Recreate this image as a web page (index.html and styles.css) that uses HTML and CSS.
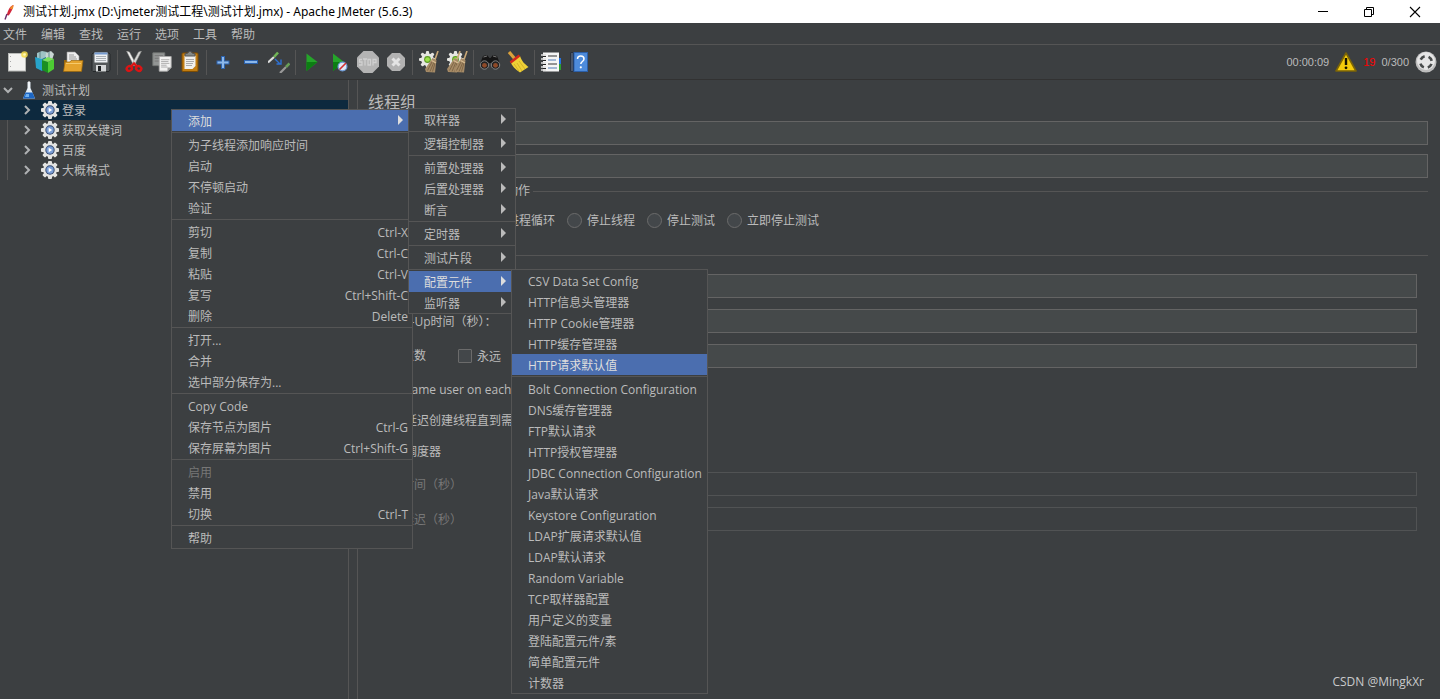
FILE: index.html
```html
<!DOCTYPE html>
<html lang="zh-CN">
<head>
<meta charset="utf-8">
<title>测试计划.jmx - Apache JMeter (5.6.3)</title>
<link rel="stylesheet" href="styles.css">
</head>
<body>
<svg class="defs" aria-hidden="true">
  <symbol id="cog" viewBox="0 0 20 20">
    <g fill="#e4e4e2"><rect x="8" y="1" width="4" height="18" rx="1"/><rect x="8" y="1" width="4" height="18" rx="1" transform="rotate(45 10 10)"/><rect x="8" y="1" width="4" height="18" rx="1" transform="rotate(90 10 10)"/><rect x="8" y="1" width="4" height="18" rx="1" transform="rotate(135 10 10)"/><circle cx="10" cy="10" r="6.900"/></g>
    <circle cx="10" cy="10" r="4.700" fill="#34486f"/><circle cx="10" cy="10" r="3.700" fill="#7c9fd6"/><path d="M8.700 7.800 12.200 10 8.700 12.200z" fill="#fff"/>
  </symbol>
  <symbol id="gear-small" viewBox="0 0 16 16">
    <g fill="#e6e6e2"><rect x="6.500" width="3" height="16" rx="1"/><rect x="6.500" width="3" height="16" rx="1" transform="rotate(45 8 8)"/><rect x="6.500" width="3" height="16" rx="1" transform="rotate(90 8 8)"/><rect x="6.500" width="3" height="16" rx="1" transform="rotate(135 8 8)"/><circle cx="8" cy="8" r="6"/></g>
    <circle cx="8" cy="8" r="3.200" fill="#5c9a22"/><circle cx="8" cy="8" r="2.200" fill="#9be04a"/>
  </symbol>
  <symbol id="broom" viewBox="0 0 14 22">
    <path d="M13 0 9.500 10" stroke="#c9a877" stroke-width="1.600"/><path d="M7.500 7 11.500 9 10 21.500 1 21 0 18z" fill="#a58a66"/><path d="M7.500 10 2.500 19.500M9 11 5 20.500M10.200 11.500 7.500 20.500" stroke="#6f573a" stroke-width=".7"/><path d="M6.500 9.500 11 12" stroke="#d9bd92" stroke-width="1.400"/>
  </symbol>
</svg>

<header class="titlebar">
  <svg class="feather" viewBox="0 0 12 16"><path d="M10.500 1C7 2 5 6 3.800 11L5.800 11.500C8 8 10 5 10.500 1z" fill="#d2283c"/><path d="M10.500 1C9 1.500 7.700 2.800 6.700 4.500L9.400 5.500C10.200 4 10.600 2.500 10.500 1z" fill="#ef8a2a"/><path d="M4 10 2 15.500" stroke="#6a2a68" stroke-width="1.400"/></svg>
  <span class="window-title">测试计划.jmx (D:\jmeter测试工程\测试计划.jmx) - Apache JMeter (5.6.3)</span>
  <div class="window-buttons">
    <button type="button" aria-label="最小化"><svg viewBox="0 0 12 12"><path d="M1 5.500H11" stroke="#000"/></svg></button>
    <button type="button" aria-label="还原"><svg viewBox="0 0 12 12" fill="none" stroke="#000"><path d="M1.500 3.500h7v7h-7zM3.500 3.500v-2h7v7h-2"/></svg></button>
    <button type="button" aria-label="关闭"><svg viewBox="0 0 12 12"><path d="M1 1 11 11M11 1 1 11" stroke="#000" stroke-width="1.100"/></svg></button>
  </div>
</header>

<nav class="menubar">
  <button type="button">文件</button><button type="button">编辑</button><button type="button">查找</button><button type="button">运行</button><button type="button">选项</button><button type="button">工具</button><button type="button">帮助</button>
</nav>

<div class="toolbar">
  <button type="button" class="tool" aria-label="新建"><svg viewBox="0 0 22 22"><rect x="2.500" y="2.500" width="17" height="17.500" fill="#f3f3f1" stroke="#b9bbb8"/><path d="M4.500 5v13" stroke="#aaa" stroke-dasharray="1 4"/><circle cx="18.500" cy="3.500" r="3.300" fill="#f4dc4a" opacity=".85"/><circle cx="18.500" cy="3.500" r="1.300" fill="#fff8b8"/></svg></button>
  <button type="button" class="tool" aria-label="模板"><svg viewBox="0 0 22 22"><path d="M3 2 8 0 13 1 12 8H3z" fill="#9fc3c5"/><path d="M12 2 17 0 20 3 18 9H11z" fill="#c9d6d4"/><path d="M6 1v6M15 1v6" stroke="#5f8588"/><path d="M1 6 8 8V20L2 17z" fill="#27a3c9"/><path d="M8 8 12 6V18L8 20z" fill="#1b6f96"/><path d="M8 9 14 11V22L8 19z" fill="#1a8f22"/><path d="M14 11 20 8V18L14 22z" fill="#4dcb33"/><path d="M8 9 14 6 20 8 14 11z" fill="#7be05d"/></svg></button>
  <button type="button" class="tool" aria-label="打开"><svg viewBox="0 0 22 22"><path d="M2 9h5l1 2h12v9H2z" fill="#9a660b"/><path d="M5 1h8l4 4v8H5z" fill="#eee" stroke="#999" stroke-width=".6"/><path d="M7 4h5M7 6h7M7 8h8" stroke="#999"/><path d="M3 11h5l1-1.500h12L19.500 20.500H1.500z" fill="#e4a32d" stroke="#9a660b" stroke-width=".7"/><path d="M4 12.500h15" stroke="#f6ca6b"/></svg></button>
  <button type="button" class="tool" aria-label="保存"><svg viewBox="0 0 22 22"><path d="M3 2h16l1 1v16l-1 1.500H3l-1-1V3z" fill="#54585a" stroke="#25282a"/><rect x="4.500" y="1.500" width="13" height="10" fill="#eef1f4"/><rect x="4.500" y="1.500" width="13" height="2" fill="#759bd0"/><path d="M6 5.500h10M6 7.500h10M6 9.500h10" stroke="#a9afb4"/><rect x="6" y="14" width="10" height="6.500" fill="#d5d7d8"/><rect x="8" y="15" width="3" height="5" fill="#1d2022"/></svg></button>
  <span class="tool-sep"></span>
  <button type="button" class="tool" aria-label="剪切"><svg viewBox="0 0 22 22"><path d="M3.500 0 6.500 1 13.500 14 11 15z" fill="#f0f0ee" stroke="#8b8b89" stroke-width=".5"/><path d="M18.500 0 15.500 1 8.500 14 11 15z" fill="#d6d7d5" stroke="#8b8b89" stroke-width=".5"/><g fill="none" stroke="#dc1414" stroke-width="2.400"><ellipse cx="6.300" cy="17.500" rx="2.700" ry="2.300" transform="rotate(-35 6.300 17.500)"/><ellipse cx="15.700" cy="17.500" rx="2.700" ry="2.300" transform="rotate(35 15.700 17.500)"/><path d="M8 15.500 11 12.500 14 15.500"/></g></svg></button>
  <button type="button" class="tool" aria-label="复制"><svg viewBox="0 0 24 22"><path d="M2 1h13v14H2z" fill="#929594" stroke="#747776"/><path d="M4 4h9M4 7h9M4 10h9" stroke="#777"/><path d="M9 5h13v12l-4 4H9z" fill="#f2f2f1" stroke="#aaa"/><path d="M11 8.500h9M11 10.500h8M11 12.500h9M11 14.500h6M11 16.500h7" stroke="#aaa"/><path d="M22 17h-4v4z" fill="#999"/></svg></button>
  <button type="button" class="tool" aria-label="粘贴"><svg viewBox="0 0 22 22"><rect x="3" y="2" width="16" height="18.500" rx="1" fill="#c17d12" stroke="#7d4d04"/><path d="M5.500 4.500h11V15l-3 3h-8z" fill="#f0f0ed"/><path d="M7 8.500h8M7 10.500h8M7 12.500h7M7 14.500h6" stroke="#aaa"/><path d="M6 5V3l3-1 1-1.500h2L13 2l3 1v2z" fill="#858985" stroke="#555"/></svg></button>
  <span class="tool-sep"></span>
  <button type="button" class="tool" aria-label="展开"><svg viewBox="0 0 22 22"><path d="M11 5v13M4.500 11.500h13" stroke="#2c62ad" stroke-width="4"/><path d="M11 6v11M5.500 11.500h11" stroke="#8cb8ea" stroke-width="2"/></svg></button>
  <button type="button" class="tool" aria-label="折叠"><svg viewBox="0 0 22 22"><path d="M4 11h14" stroke="#2c62ad" stroke-width="4"/><path d="M5 11h12" stroke="#8cb8ea" stroke-width="2"/></svg></button>
  <button type="button" class="tool" aria-label="切换"><svg viewBox="0 0 22 22"><path d="M0 11.500 6 6" stroke="#ddd" stroke-width="2.200"/><path d="M6 6 10 1.500" stroke="#71b557" stroke-width="2.600"/><path d="M12 22 18 16" stroke="#999" stroke-width="2.200"/><path d="M18 16 21.500 12.500" stroke="#689e58" stroke-width="2.600"/><path d="M7 8 12 13M8.500 13h4.500V8.500" fill="none" stroke="#2d70d2" stroke-width="1.400"/></svg></button>
  <span class="tool-sep"></span>
  <button type="button" class="tool" aria-label="启动"><svg viewBox="0 0 22 22"><path d="M5.500 2.500 16.500 11 5.500 20z" fill="#25a52a"/><path d="M5.500 11H16.500L5.500 20z" fill="#0c7d13"/></svg></button>
  <button type="button" class="tool" aria-label="不停顿启动"><svg viewBox="0 0 22 22"><path d="M4 2.500 15 11 4 20z" fill="#25a52a"/><path d="M4 11H15L4 20z" fill="#0c7d13"/><circle cx="13.500" cy="15.500" r="4.400" fill="#dfe8f6" stroke="#6e9bd6" stroke-width="1.200"/><path d="M10.500 18.500 17 12" stroke="#d23030" stroke-width="1.600"/></svg></button>
  <button type="button" class="tool" aria-label="停止"><svg viewBox="0 0 22 22"><path d="M6.500 0h9L22 6.500v9L15.500 22h-9L0 15.500v-9z" fill="#b4b4b4"/><g fill="none" stroke="#d0d0d0" stroke-width="1.300"><path d="M5 8.500H2.500v2.500H5v3H2M6 8h4M8 8v6.500M11 8.500h2.500v5.500H11zM16 14.500v-6h3v3h-3"/></g></svg></button>
  <button type="button" class="tool" aria-label="关闭线程"><svg viewBox="0 0 22 22"><path d="M7 2h8l5 5v8l-5 5H7l-5-5V7z" fill="#b2b2b2"/><path d="M7.500 7.500 14.500 14.500M14.500 7.500 7.500 14.500" stroke="#e4e4e4" stroke-width="3"/></svg></button>
  <span class="tool-sep"></span>
  <button type="button" class="tool" aria-label="清除"><svg viewBox="0 0 22 22"><use href="#gear-small" x="1" y="0" width="17" height="17"/><use href="#broom" x="7" y="0" width="14" height="22"/></svg></button>
  <button type="button" class="tool" aria-label="清除全部"><svg viewBox="0 0 22 22"><use href="#gear-small" x="1" y="0" width="17" height="17"/><use href="#broom" x="1" y="0" width="14" height="22"/><use href="#broom" x="8" y="0" width="14" height="22"/></svg></button>
  <span class="tool-sep"></span>
  <button type="button" class="tool" aria-label="查找"><svg viewBox="0 0 22 22"><path d="M1 13 4 5 8 4 10.500 7h1L14 4l4 1 3 8-4 5h-3l-2-6h-2l-2 6H5z" fill="#151515"/><path d="M4.500 6 8 5M14 5l3.500 1" stroke="#777"/><circle cx="5.500" cy="14" r="4.200" fill="#222" stroke="#999" stroke-width=".8"/><circle cx="16.500" cy="14" r="4.200" fill="#222" stroke="#999" stroke-width=".8"/><circle cx="5.500" cy="14.300" r="2.400" fill="#8f4a28"/><circle cx="16.500" cy="14.300" r="2.400" fill="#8f4a28"/></svg></button>
  <button type="button" class="tool" aria-label="重置查找"><svg viewBox="0 0 22 22"><path d="M2 1 8 8" stroke="#dba13b" stroke-width="3.200"/><path d="M8 7 13 5C15 11 18 13 21.500 16L13 21.500C8 18 5 15 3.500 11z" fill="#eed036"/><path d="M10 12 15 20M12 10 18 18M7 13 12 20" stroke="#c9a424" stroke-width=".7"/><path d="M3.500 11.500 12.500 4.500" stroke="#d3271c" stroke-width="2.600"/></svg></button>
  <span class="tool-sep"></span>
  <button type="button" class="tool" aria-label="函数助手"><svg viewBox="0 0 22 22"><path d="M19 7h2v6h-2z" fill="#2571dc"/><path d="M19 13h2v6h-2z" fill="#2b9d32"/><rect x="3" y="1.500" width="16" height="19" fill="#f5f5f5"/><path d="M1 4h5M1 8h5M1 12h5M1 16h5M1 19h5" stroke="#ddd" stroke-width="1.600"/><path d="M3 5.500h3M3 9.500h3M3 13.500h3M3 17.500h3" stroke="#222"/><path d="M8 5h9M8 13h9" stroke="#333" stroke-width="1.200"/><path d="M8 9h8M8 17h9" stroke="#527cb5" stroke-width="1.200"/></svg></button>
  <button type="button" class="tool" aria-label="帮助"><svg viewBox="0 0 22 22"><path d="M2.500 1.500h5v19h-5z" fill="#17243b"/><rect x="6" y="1.500" width="13.500" height="19" fill="#4d8bdb" stroke="#2c5fa8"/><path d="M4 2v18" stroke="#9aa5b5" stroke-width=".8"/><path d="M9.500 8c0-4 6.500-4 6.500 0 0 2.500-3.200 2.500-3.200 5" fill="none" stroke="#fff" stroke-width="1.500"/><circle cx="12.800" cy="16.300" r="1.100" fill="#fff"/></svg></button>
  <div class="status">
    <span>00:00:09</span>
    <svg class="warn" viewBox="0 0 22 20"><path d="M11 1 21 19H1z" fill="#f5cb0b" stroke="#7b6407" stroke-width="1.600" stroke-linejoin="round"/><path d="M11 6v7" stroke="#171400" stroke-width="2.400"/><circle cx="11" cy="15.800" r="1.400" fill="#171400"/></svg>
    <span class="errors">19</span>
    <span>0/300</span>
    <svg class="remote" viewBox="0 0 22 22"><circle cx="11" cy="11" r="10.500" fill="#bdbdbd"/><circle cx="11" cy="10" r="9" fill="#e6e6e6"/><circle cx="11" cy="11" r="5.800" fill="none" stroke="#484b4b" stroke-width="2.600" stroke-dasharray="5 4.110" stroke-dashoffset="-2"/></svg>
  </div>
</div>

<main class="workspace">
  <aside class="tree">
    <div class="node root"><svg class="caret" viewBox="0 0 10 10"><path d="M1 3 5 7 9 3" /></svg><svg class="flask" viewBox="0 0 16 20"><path d="M6.500 2h3v6l4.500 10.500H2L6.500 8z" fill="#dfe9f2"/><path d="M4.500 12.500h7l2.500 6h-12z" fill="#1c66c4"/><path d="M5 14h3v3H4z" fill="#6fb0f0"/><path d="M8 1v9" stroke="#fff"/></svg><span>测试计划</span></div>
    <div class="children">
      <div class="node selected"><svg class="caret" viewBox="0 0 10 10"><path d="M3 1 7 5 3 9"/></svg><svg class="cog"><use href="#cog"/></svg><span>登录</span></div>
      <div class="node"><svg class="caret" viewBox="0 0 10 10"><path d="M3 1 7 5 3 9"/></svg><svg class="cog"><use href="#cog"/></svg><span>获取关键词</span></div>
      <div class="node"><svg class="caret" viewBox="0 0 10 10"><path d="M3 1 7 5 3 9"/></svg><svg class="cog"><use href="#cog"/></svg><span>百度</span></div>
      <div class="node"><svg class="caret" viewBox="0 0 10 10"><path d="M3 1 7 5 3 9"/></svg><svg class="cog"><use href="#cog"/></svg><span>大概格式</span></div>
    </div>
  </aside>
  <form class="panel">
    <h1>线程组</h1>
    <div class="head-field"><input type="text" aria-label="名称"></div>
    <div class="head-field"><input type="text" aria-label="注释"></div>
    <fieldset class="on-error">
      <legend>在取样器错误后要执行的动作</legend>
      <div class="radios">
        <label><input type="radio" name="err"><span>继续</span></label>
        <label><input type="radio" name="err"><span>启动下一进程循环</span></label>
        <label><input type="radio" name="err"><span>停止线程</span></label>
        <label><input type="radio" name="err"><span>停止测试</span></label>
        <label><input type="radio" name="err"><span>立即停止测试</span></label>
      </div>
    </fieldset>
    <fieldset class="thread">
      <legend>线程属性</legend>
      <div class="props">
        <div class="prop"><label for="threads">线程数：</label><input type="text" id="threads"></div>
        <div class="prop"><label for="ramp">Ramp-Up时间（秒）：</label><input type="text" id="ramp"></div>
        <div class="prop"><div class="loop"><label for="loops">循环次数</label><label class="check"><input type="checkbox"><span>永远</span></label></div><input type="text" id="loops"></div>
        <label class="check line"><input type="checkbox"><span>Same user on each iteration</span></label>
        <label class="check line"><input type="checkbox"><span>延迟创建线程直到需要</span></label>
        <label class="check line"><input type="checkbox"><span>调度器</span></label>
        <div class="prop"><label for="duration">持续时间（秒）</label><input type="text" id="duration" disabled></div>
        <div class="prop"><label for="delay">启动延迟（秒）</label><input type="text" id="delay" disabled></div>
      </div>
    </fieldset>
  </form>
</main>

<ul class="menu context">
  <li><button type="button" class="active sub">添加</button></li>
  <li class="sep"></li>
  <li><button type="button">为子线程添加响应时间</button></li>
  <li><button type="button">启动</button></li>
  <li><button type="button">不停顿启动</button></li>
  <li><button type="button">验证</button></li>
  <li class="sep"></li>
  <li><button type="button">剪切<kbd>Ctrl-X</kbd></button></li>
  <li><button type="button">复制<kbd>Ctrl-C</kbd></button></li>
  <li><button type="button">粘贴<kbd>Ctrl-V</kbd></button></li>
  <li><button type="button">复写<kbd>Ctrl+Shift-C</kbd></button></li>
  <li><button type="button">删除<kbd>Delete</kbd></button></li>
  <li class="sep"></li>
  <li><button type="button">打开...</button></li>
  <li><button type="button">合并</button></li>
  <li><button type="button">选中部分保存为...</button></li>
  <li class="sep"></li>
  <li><button type="button">Copy Code</button></li>
  <li><button type="button">保存节点为图片<kbd>Ctrl-G</kbd></button></li>
  <li><button type="button">保存屏幕为图片<kbd>Ctrl+Shift-G</kbd></button></li>
  <li class="sep"></li>
  <li><button type="button" disabled>启用</button></li>
  <li><button type="button">禁用</button></li>
  <li><button type="button">切换<kbd>Ctrl-T</kbd></button></li>
  <li class="sep"></li>
  <li><button type="button">帮助</button></li>
</ul>

<ul class="menu add">
  <li><button type="button" class="sub">取样器</button></li>
  <li class="sep"></li>
  <li><button type="button" class="sub">逻辑控制器</button></li>
  <li class="sep"></li>
  <li><button type="button" class="sub">前置处理器</button></li>
  <li><button type="button" class="sub">后置处理器</button></li>
  <li><button type="button" class="sub">断言</button></li>
  <li class="sep"></li>
  <li><button type="button" class="sub">定时器</button></li>
  <li class="sep"></li>
  <li><button type="button" class="sub">测试片段</button></li>
  <li class="sep"></li>
  <li><button type="button" class="active sub">配置元件</button></li>
  <li><button type="button" class="sub">监听器</button></li>
</ul>

<ul class="menu config">
  <li><button type="button">CSV Data Set Config</button></li>
  <li><button type="button">HTTP信息头管理器</button></li>
  <li><button type="button">HTTP Cookie管理器</button></li>
  <li><button type="button">HTTP缓存管理器</button></li>
  <li><button type="button" class="active">HTTP请求默认值</button></li>
  <li class="sep"></li>
  <li><button type="button">Bolt Connection Configuration</button></li>
  <li><button type="button">DNS缓存管理器</button></li>
  <li><button type="button">FTP默认请求</button></li>
  <li><button type="button">HTTP授权管理器</button></li>
  <li><button type="button">JDBC Connection Configuration</button></li>
  <li><button type="button">Java默认请求</button></li>
  <li><button type="button">Keystore Configuration</button></li>
  <li><button type="button">LDAP扩展请求默认值</button></li>
  <li><button type="button">LDAP默认请求</button></li>
  <li><button type="button">Random Variable</button></li>
  <li><button type="button">TCP取样器配置</button></li>
  <li><button type="button">用户定义的变量</button></li>
  <li><button type="button">登陆配置元件/素</button></li>
  <li><button type="button">简单配置元件</button></li>
  <li><button type="button">计数器</button></li>
</ul>

<div class="watermark">CSDN @MingkXr</div>
</body>
</html>
```
FILE: styles.css
```css
* { box-sizing: border-box; }

body {
  margin: 0;
  min-height: 100vh;
  display: flex;
  flex-direction: column;
  background: #3c3f41;
  color: #bbb;
  font: 12px/16px "Open Sans", "Noto Sans CJK SC", sans-serif;
}

button, input {
  font: inherit;
  color: inherit;
  margin: 0;
}

button {
  border: 0;
  padding: 0;
  background: none;
}

svg { display: block; flex: none; }

.defs { position: absolute; width: 0; height: 0; }

/* Title bar */
.titlebar {
  display: flex;
  align-items: center;
  height: 23px;
  padding-left: 3px;
  background: #fff;
  color: #000;
}

.feather { width: 12px; height: 16px; margin-right: 8px; }

.window-title {
  font-family: "Noto Sans", "Noto Sans CJK SC", sans-serif;
  white-space: nowrap;
}

.window-buttons { display: flex; margin-left: auto; padding-right: 2px; }

.window-buttons button {
  width: 46px;
  display: flex;
  justify-content: center;
}

.window-buttons svg { width: 12px; height: 12px; }

/* Menu bar */
.menubar {
  display: flex;
  gap: 14px;
  height: 22px;
  padding: 2px 0 0 3px;
  border-bottom: 1px solid #555;
}

/* Toolbar */
.toolbar {
  display: flex;
  align-items: center;
  height: 35px;
  padding-left: 3px;
  border-bottom: 1px solid #323232;
}

.tool {
  width: 28px;
  height: 28px;
  display: flex;
  align-items: center;
  justify-content: center;
}

.tool svg { width: 22px; height: 22px; }

.tool-sep {
  width: 1px;
  height: 25px;
  margin: 0 2px;
  background: #555;
}

.status {
  display: flex;
  align-items: center;
  gap: 6px;
  margin-left: auto;
  padding-right: 3px;
  font: 11px/16px "Liberation Sans", sans-serif;
}

.warn { width: 22px; height: 20px; }
.remote { width: 22px; height: 22px; }
.errors { color: #f00; }

/* Workspace */
.workspace { flex: 1; display: flex; }

.tree {
  flex: 0 0 349px;
  border-right: 1px solid #555;
}

.node {
  display: flex;
  align-items: center;
  height: 20px;
  padding-left: 22px;
}

.node span { padding-top: 2px; }

.node.root { padding-left: 3px; }
.node.root .caret { margin-right: 8px; }
.node.selected { background: #0d293e; }

.children { background: linear-gradient(#555, #555) 7px 0 / 1px 100% no-repeat; }

.caret {
  width: 10px;
  height: 10px;
  margin-right: 8px;
  fill: none;
  stroke: #afb1b3;
  stroke-width: 2;
}

.flask { width: 16px; height: 20px; margin-right: 5px; }
.cog { width: 20px; height: 20px; margin-right: 2px; }

.panel {
  flex: 1;
  min-width: 0;
  margin-left: 8px;
  padding: 12px 12px 0 10px;
  border-left: 1px solid #555;
}

h1 {
  margin: 0 0 9px;
  font-size: 16px;
  line-height: 20px;
  font-weight: 400;
}

.head-field {
  display: flex;
  padding-left: 60px;
  margin-bottom: 9px;
}

input[type="text"] {
  flex: 1;
  min-width: 0;
  height: 24px;
  padding: 0 6px;
  border: 1px solid #646464;
  border-radius: 0;
  background: #45494a;
}

input[type="text"]:disabled {
  border-color: #515354;
  background: #3c3f41;
}

fieldset {
  min-width: 0;
  margin: 0;
  padding: 0;
  border: 0;
  border-top: 1px solid #555;
}

.on-error { margin-top: -4px; }

legend {
  margin-left: 3px;
  padding: 0 3px;
}

.radios {
  display: flex;
  gap: 12px;
  padding: 11px 0 17px 15px;
}

.radios label, .check {
  display: flex;
  align-items: center;
  gap: 5px;
  height: 20px;
  white-space: nowrap;
}

.radios span, .check span { padding-top: 2px; }

input[type="radio"], input[type="checkbox"] {
  appearance: none;
  width: 15px;
  height: 15px;
  border: 1px solid #6b6b6b;
  background: #43474a;
}

input[type="radio"] { border-radius: 50%; }

input[type="checkbox"] {
  width: 14px;
  height: 14px;
  border-radius: 1px;
}

.props {
  display: flex;
  flex-direction: column;
  gap: 11px;
  padding: 11px 11px 0 10px;
}

.prop { display: flex; align-items: center; }
.prop > :first-child { flex: 0 0 148px; }
.prop > label { padding-top: 2px; }
.prop:has(input:disabled) { color: #777; }

.loop { display: flex; align-items: center; gap: 32px; }

.check.line { padding-left: 8px; }

/* Popup menus */
.menu {
  position: absolute;
  margin: 0;
  padding: 0;
  border: 1px solid #555;
  background: #3c3f41;
  list-style: none;
}

.context { left: 171px; top: 109px; width: 242px; }
.add { left: 408px; top: 108px; width: 108px; }
.config { left: 511px; top: 269px; width: 197px; }

.menu button {
  display: flex;
  align-items: center;
  width: 100%;
  height: 21px;
  padding: 2px 4px 0 16px;
  white-space: nowrap;
}

.menu.add button { padding-left: 15px; }

.menu button:disabled { color: #777; }
.menu .active { background: #4b6eaf; color: #ddd; }

.sep {
  height: 3px;
  border: 1px solid #3c3f41;
  border-width: 1px 0;
  background: #555;
}

kbd { margin-left: auto; font: inherit; }

.sub::after {
  content: "";
  margin: 0 5px 3px auto;
  border: 5px solid transparent;
  border-left-color: currentColor;
  border-right-width: 0;
}

.watermark {
  position: absolute;
  right: 16px;
  bottom: 9px;
  color: #c9cacb;
}
```
